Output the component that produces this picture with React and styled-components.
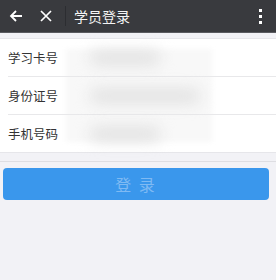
import styled, { createGlobalStyle } from "styled-components";

const GlobalStyle = createGlobalStyle`
  html, body {
    margin: 0;
    padding: 0;
    background: #f2f2f6;
    font-family: "Noto Sans CJK SC", "Liberation Sans", sans-serif;
  }
`;

const rows = [
  { label: "学习卡号", blur: 70 },
  { label: "身份证号", blur: 110 },
  { label: "手机号码", blur: 70 },
];

function App() {
  return (
    <Page>
      <GlobalStyle />
      <Header>
        <IconBtn>
          <svg width="14" height="14" viewBox="0 0 14 14" fill="none" stroke="#fff" strokeWidth="1.8">
            <path d="M13 7H2M7 2L2 7l5 5" />
          </svg>
        </IconBtn>
        <IconBtn>
          <svg width="12" height="12" viewBox="0 0 12 12" fill="none" stroke="#fff" strokeWidth="1.7">
            <path d="M1 1l10 10M11 1L1 11" />
          </svg>
        </IconBtn>
        <Divider />
        <Title>学员登录</Title>
        <Menu>
          <Dot />
          <Dot />
          <Dot />
        </Menu>
      </Header>
      <Form>
        <Blur />
        {rows.map((r, i) => (
          <Row key={r.label} $last={i === rows.length - 1}>
            <Label>{r.label}</Label>
            <Blob style={{ width: r.blur }} />
          </Row>
        ))}
      </Form>
      <Rule />
      <Button>登 录</Button>
    </Page>
  );
}

export default App

const Page = styled.div`
  width: 276px;
  height: 280px;
  background: #f2f2f6;
  overflow: hidden;
`;

const Header = styled.div`
  height: 32px;
  background: #393a3e;
  display: flex;
  align-items: center;
  padding: 0 8px 0 6px;
  border-bottom: 1px solid #5a5b60;
`;

const IconBtn = styled.div`
  width: 16px;
  height: 20px;
  display: flex;
  align-items: center;
  justify-content: center;
  margin-right: 14px;
  &:first-child {
    margin-left: 2px;
  }
`;

const Divider = styled.div`
  width: 1px;
  height: 20px;
  background: #2c2d31;
  margin-left: -3px;
  margin-right: 8px;
`;

const Title = styled.div`
  color: #f4f4f4;
  font-size: 14px;
  flex: 1;
`;

const Menu = styled.div`
  display: flex;
  flex-direction: column;
  gap: 3px;
  margin-right: 6px;
`;

const Dot = styled.span`
  width: 3px;
  height: 3px;
  background: #fff;
`;

const Form = styled.div`
  position: relative;
  margin-top: 5px;
  background: #fff;
  border-top: 1px solid #e6e6ea;
  border-bottom: 1px solid #e6e6ea;
  padding-left: 8px;
`;

const Blur = styled.div`
  position: absolute;
  left: 66px;
  top: 10px;
  width: 146px;
  height: 93px;
  background: #f8f8f8;
  filter: blur(2px);
`;

const Row = styled.div`
  position: relative;
  height: 37px;
  display: flex;
  align-items: center;
  border-bottom: ${(p) => (p.$last ? "none" : "1px solid #e8e8ea")};
`;

const Label = styled.span`
  font-size: 12.5px;
  color: #333;
  width: 58px;
`;

const Blob = styled.span`
  height: 12px;
  margin-left: 24px;
  background: #dcdcdc;
  border-radius: 6px;
  filter: blur(8px);
`;

const Rule = styled.div`
  height: 1px;
  background: #dedee2;
  margin-top: 8px;
`;

const Button = styled.div`
  margin: 6px 7px 0 3px;
  height: 32px;
  background: #3a97ec;
  border-radius: 4px;
  color: #7fbaf3;
  font-size: 16px;
  display: flex;
  align-items: center;
  justify-content: center;
  letter-spacing: 2px;
`;
